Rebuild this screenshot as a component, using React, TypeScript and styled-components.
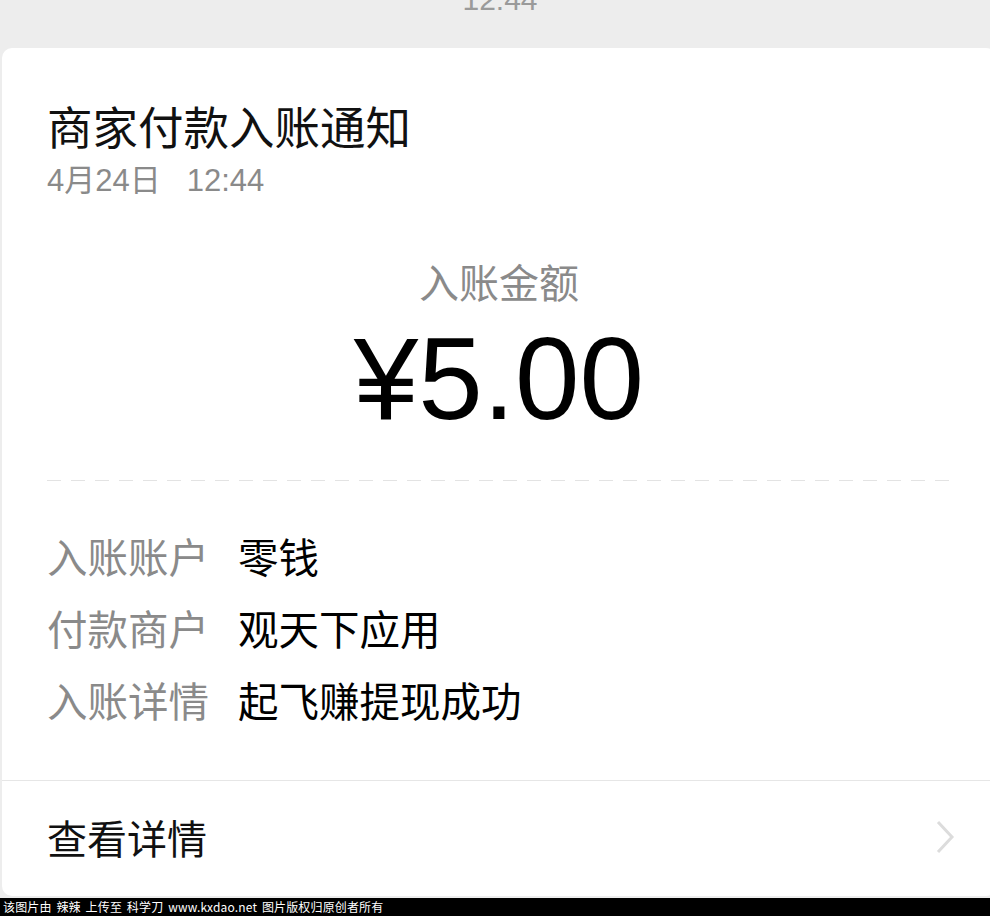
import React from "react";
import styled, { createGlobalStyle } from "styled-components";

const Global = createGlobalStyle`
  html, body { margin: 0; padding: 0; background: #ededed; }
  body { font-family: "Noto Sans CJK SC", "Noto Sans", sans-serif; }
`;

const Page = styled.div`
  width: 990px;
  height: 916px;
  overflow: hidden;
  display: flex;
  flex-direction: column;
  background: #ededed;
`;

const TopTime = styled.div`
  height: 48px;
  flex: none;
  text-align: center;
  font-family: "Liberation Sans", Arial, sans-serif;
  font-size: 30px;
  line-height: 30px;
  color: #9a9a9a;
  overflow: hidden;
  padding-left: 10px;
  & > span { display: block; margin-top: -15px; }
`;

const Card = styled.div`
  flex: none;
  margin-left: 2px;
  width: 994px;
  height: 848px;
  background: #fff;
  border-radius: 10px;
  display: flex;
  flex-direction: column;
  box-sizing: border-box;
  padding-top: 55px;
  overflow: hidden;
`;

const Header = styled.div`
  padding: 0 45px;
`;

const Title = styled.div`
  font-size: 45.5px;
  line-height: 45px;
  color: #111;
`;

const DateLine = styled.div`
  margin-top: 18px;
  font-family: "Liberation Sans", "Noto Sans CJK SC", sans-serif;
  font-size: 31px;
  line-height: 30px;
  color: #8a8a8a;
  display: flex;
  gap: 26px;
`;

const AmountBlock = styled.div`
  display: flex;
  flex-direction: column;
  align-items: center;
  margin-top: 65px;
`;

const AmountLabel = styled.div`
  font-size: 40px;
  line-height: 40px;
  color: #8a8a8a;
`;

const Amount = styled.div`
  margin-top: 21px;
  font-family: "Liberation Sans", Arial, sans-serif;
  font-size: 116px;
  line-height: 115px;
  color: #000;
`;

const Dashed = styled.div`
  margin: 43px 44px 0 45px;
  height: 1px;
  background-image: linear-gradient(to right, #e3e3e3 0 14px, transparent 14px 24px);
  background-size: 24px 1px;
  background-repeat: repeat-x;
`;

const Rows = styled.div`
  margin-top: 39px;
  padding: 0 45px;
  display: flex;
  flex-direction: column;
`;

const Row = styled.div`
  display: flex;
  height: 72px;
  align-items: center;
  font-size: 40.5px;
  line-height: 72px;
`;

const RowLabel = styled.span`
  width: 191px;
  flex: none;
  color: #8a8a8a;
`;

const RowValue = styled.span`
  color: #000;
`;

const Separator = styled.div`
  margin-top: 44px;
  height: 1px;
  background: #e6e6e6;
`;

const Footer = styled.div`
  flex: 1;
  display: flex;
  align-items: center;
  justify-content: space-between;
  padding: 0 39px 4px 45px;
`;

const FooterText = styled.span`
  font-size: 40px;
  line-height: 40px;
  color: #111;
`;

const Chevron = styled.svg`
  width: 22px;
  height: 36px;
  display: block;
`;

const Watermark = styled.div`
  margin-top: 2px;
  flex: 1;
  background: #000;
  color: #fff;
  font-family: "Noto Sans CJK SC", sans-serif;
  font-size: 12px;
  line-height: 18px;
  letter-spacing: 0.15px;
  word-spacing: 2px;
  padding-left: 3px;
  white-space: pre;
`;

const rows: [string, string][] = [
  ["入账账户", "零钱"],
  ["付款商户", "观天下应用"],
  ["入账详情", "起飞赚提现成功"],
];

export default function App() {
  return (
    <Page>
      <Global />
      <TopTime>
        <span>12:44</span>
      </TopTime>
      <Card>
        <Header>
          <Title>商家付款入账通知</Title>
          <DateLine>
            <span>4月24日</span>
            <span>12:44</span>
          </DateLine>
        </Header>
        <AmountBlock>
          <AmountLabel>入账金额</AmountLabel>
          <Amount>¥5.00</Amount>
        </AmountBlock>
        <Dashed />
        <Rows>
          {rows.map(([k, v]) => (
            <Row key={k}>
              <RowLabel>{k}</RowLabel>
              <RowValue>{v}</RowValue>
            </Row>
          ))}
        </Rows>
        <Separator />
        <Footer>
          <FooterText>查看详情</FooterText>
          <Chevron viewBox="0 0 22 36">
            <polyline points="3,3 17,18 3,33" fill="none" stroke="#dcdcdc" strokeWidth="3" />
          </Chevron>
        </Footer>
      </Card>
      <Watermark>{"该图片由 辣辣 上传至 科学刀 www.kxdao.net 图片版权归原创者所有"}</Watermark>
    </Page>
  );
}
